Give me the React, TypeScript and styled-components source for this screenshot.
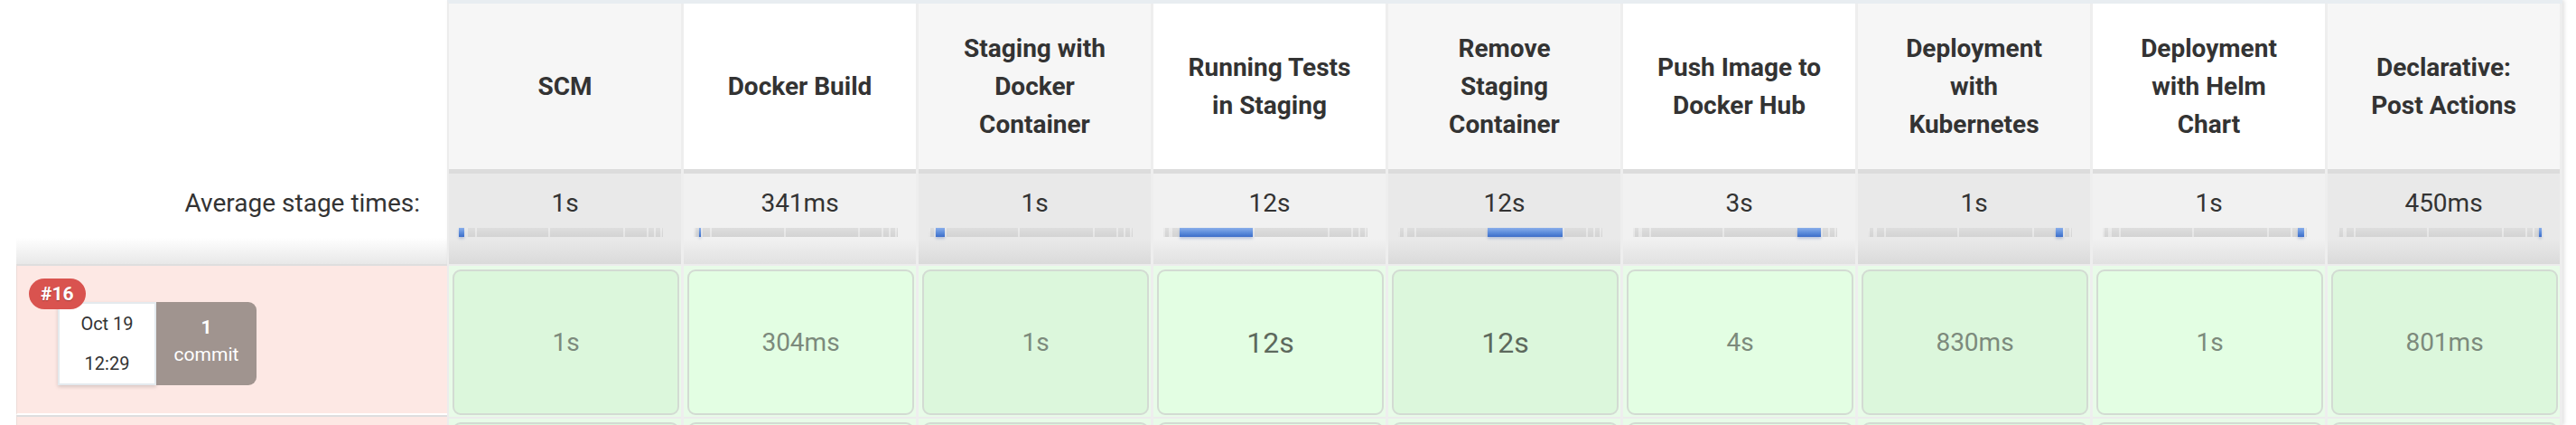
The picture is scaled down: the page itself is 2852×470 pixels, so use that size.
import React from "react";
import styled, { createGlobalStyle } from "styled-components";

const GlobalStyle = createGlobalStyle`
  html, body {
    margin: 0;
    padding: 0;
    background: #ffffff;
    overflow: hidden;
  }
  body {
    font-family: Roboto, "Liberation Sans", sans-serif;
    color: #333333;
  }
`;

type Stage = {
  name: string[];
  avg: string;
  time: string;
  share: number; // share of the total run, in percent
  long?: boolean;
};

const stages: Stage[] = [
  { name: ["SCM"], avg: "1s", time: "1s", share: 2.6 },
  { name: ["Docker Build"], avg: "341ms", time: "304ms", share: 0.8 },
  { name: ["Staging with", "Docker", "Container"], avg: "1s", time: "1s", share: 4.6 },
  { name: ["Running Tests", "in Staging"], avg: "12s", time: "12s", share: 36, long: true },
  { name: ["Remove", "Staging", "Container"], avg: "12s", time: "12s", share: 36.5, long: true },
  { name: ["Push Image to", "Docker Hub"], avg: "3s", time: "4s", share: 11.5 },
  { name: ["Deployment", "with", "Kubernetes"], avg: "1s", time: "830ms", share: 3.6 },
  { name: ["Deployment", "with Helm", "Chart"], avg: "1s", time: "1s", share: 3 },
  { name: ["Declarative:", "Post Actions"], avg: "450ms", time: "801ms", share: 1.4 },
];

const Page = styled.div`
  display: flex;
  align-items: flex-start;
  padding-left: 18px;
`;

/* left side: labels and build info */
const LeftColumn = styled.div`
  display: flex;
  flex-direction: column;
  width: 477px;
`;

const HeadSpacer = styled.div`
  height: 187px;
`;

const AvgLabel = styled.div`
  height: 105px;
  box-sizing: border-box;
  padding: 21px 30px 0 0;
  text-align: right;
  font-size: 28px;
  line-height: 34px;
  background: linear-gradient(to bottom, #ffffff 72%, #e8e8e8 100%);
`;

const BuildInfo = styled.div<{ $peek?: boolean }>`
  position: relative;
  display: flex;
  box-sizing: border-box;
  height: ${({ $peek }) => ($peek ? "11px" : "167px")};
  padding: ${({ $peek }) => ($peek ? "0" : "40px 0 0 45px")};
  background: #fde8e4;
  border-top: 2px solid #dedede;
  border-bottom: ${({ $peek }) => ($peek ? "none" : "2px solid #ffffff")};
  border-left: 1px solid #ecdcd8;
`;

const Badge = styled.span`
  position: absolute;
  top: 14px;
  left: 13px;
  z-index: 2;
  height: 34px;
  padding: 0 13px;
  border-radius: 17px;
  background: #d9534f;
  color: #ffffff;
  font-weight: 700;
  font-size: 21px;
  line-height: 34px;
  text-shadow: 0 1px 1px rgba(0, 0, 0, 0.25);
`;

const DateBox = styled.div`
  width: 109px;
  height: 92px;
  box-sizing: border-box;
  border: 2px solid #e4eaee;
  background: #ffffff;
  box-shadow: 0 2px 4px rgba(0, 0, 0, 0.15);
  display: flex;
  flex-direction: column;
  align-items: center;
  font-size: 20px;
  line-height: 44px;
  color: #333333;
`;

const CommitBox = styled.div`
  width: 111px;
  height: 92px;
  box-sizing: border-box;
  padding-bottom: 6px;
  background: #a0948f;
  border-radius: 0 9px 9px 0;
  color: #ffffff;
  display: flex;
  flex-direction: column;
  align-items: center;
  justify-content: center;
  font-size: 21px;
  line-height: 30px;
`;

const CommitCount = styled.span`
  font-weight: 700;
`;

/* stage table */
const Stages = styled.div`
  display: flex;
  border-top: 4px solid #e8edf1;
  border-left: 2px solid #ececec;
  box-shadow: 2px 0 4px rgba(0, 0, 0, 0.12);
`;

const StageColumn = styled.div`
  display: flex;
  flex-direction: column;
  width: 257px;
  border-right: 3px solid #eeeeee;
`;

const StageHead = styled.div<{ $odd: boolean }>`
  height: 183px;
  box-sizing: border-box;
  padding: 0 12px;
  display: flex;
  flex-direction: column;
  align-items: center;
  justify-content: center;
  background: ${({ $odd }) => ($odd ? "#f6f6f6" : "#ffffff")};
  font-weight: 700;
  font-size: 28px;
  line-height: 42px;
  color: #333333;
  white-space: nowrap;
`;

const StageAvg = styled.div<{ $odd: boolean }>`
  height: 105px;
  box-sizing: border-box;
  border-top: 5px solid #dcdcdc;
  padding-top: 16px;
  text-align: center;
  font-size: 28px;
  line-height: 34px;
  background: ${({ $odd }) =>
    $odd
      ? "linear-gradient(to bottom, #e9e9e9 72%, #dadada 100%)"
      : "linear-gradient(to bottom, #f1f1f1 72%, #e1e1e1 100%)"};
`;

const Bar = styled.div`
  display: flex;
  width: 226px;
  height: 10px;
  margin: 10px 0 0 11px;
  background: linear-gradient(to bottom, #dedede, #d3d3d3);
`;

const Segment = styled.div<{ $active: boolean }>`
  position: relative;
  height: 100%;
  min-width: ${({ $active }) => ($active ? "2px" : "0")};
  background: ${({ $active }) =>
    $active
      ? "linear-gradient(to bottom, #8aaeea 0%, #5b8bdb 55%, #3c6dc8 100%)"
      : "transparent"};
  box-shadow: ${({ $active }) =>
    $active ? "0 2px 3px rgba(60, 100, 180, 0.3)" : "none"};

  &::before {
    content: "";
    position: absolute;
    left: 0;
    top: 0;
    bottom: 0;
    width: 2px;
    background: rgba(255, 255, 255, 0.4);
    display: ${({ $active }) => ($active ? "none" : "block")};
  }
`;

const StageCell = styled.div<{ $peek?: boolean }>`
  border-top: 2px solid #ececec;
  padding: ${({ $peek }) => ($peek ? "4px 2px 0 4px" : "4px 2px 2px 4px")};
  background: #e8fbe8;
  height: ${({ $peek }) => ($peek ? "3px" : "auto")};
  overflow: hidden;
`;

const CellBox = styled.div<{ $odd: boolean; $long?: boolean }>`
  height: 161px;
  box-sizing: border-box;
  border: 2px solid #d3dbd3;
  border-radius: 9px;
  background: ${({ $odd }) => ($odd ? "#dcf7dc" : "#e3fee3")};
  display: flex;
  align-items: center;
  justify-content: center;
  font-size: ${({ $long }) => ($long ? "32px" : "28px")};
  color: ${({ $long }) => ($long ? "#5d695d" : "#7c8a7c")};
`;

function StageBar({ index }: { index: number }) {
  return (
    <Bar>
      {stages.map((s, i) => (
        <Segment key={i} $active={i === index} style={{ width: `${s.share}%` }} />
      ))}
    </Bar>
  );
}

export default function App() {
  return (
    <>
      <GlobalStyle />
      <Page>
        <LeftColumn>
          <HeadSpacer />
          <AvgLabel>Average stage times:</AvgLabel>
          <BuildInfo>
            <Badge>#16</Badge>
            <DateBox>
              <span>Oct 19</span>
              <span>12:29</span>
            </DateBox>
            <CommitBox>
              <CommitCount>1</CommitCount>
              <span>commit</span>
            </CommitBox>
          </BuildInfo>
          <BuildInfo $peek />
        </LeftColumn>

        <Stages>
          {stages.map((stage, i) => {
            const odd = i % 2 === 0;
            return (
              <StageColumn key={stage.name.join(" ")}>
                <StageHead $odd={odd}>
                  {stage.name.map((line) => (
                    <span key={line}>{line}</span>
                  ))}
                </StageHead>
                <StageAvg $odd={odd}>
                  {stage.avg}
                  <StageBar index={i} />
                </StageAvg>
                <StageCell>
                  <CellBox $odd={odd} $long={stage.long}>
                    {stage.time}
                  </CellBox>
                </StageCell>
                <StageCell $peek>
                  <CellBox $odd={odd} />
                </StageCell>
              </StageColumn>
            );
          })}
        </Stages>
      </Page>
    </>
  );
}
